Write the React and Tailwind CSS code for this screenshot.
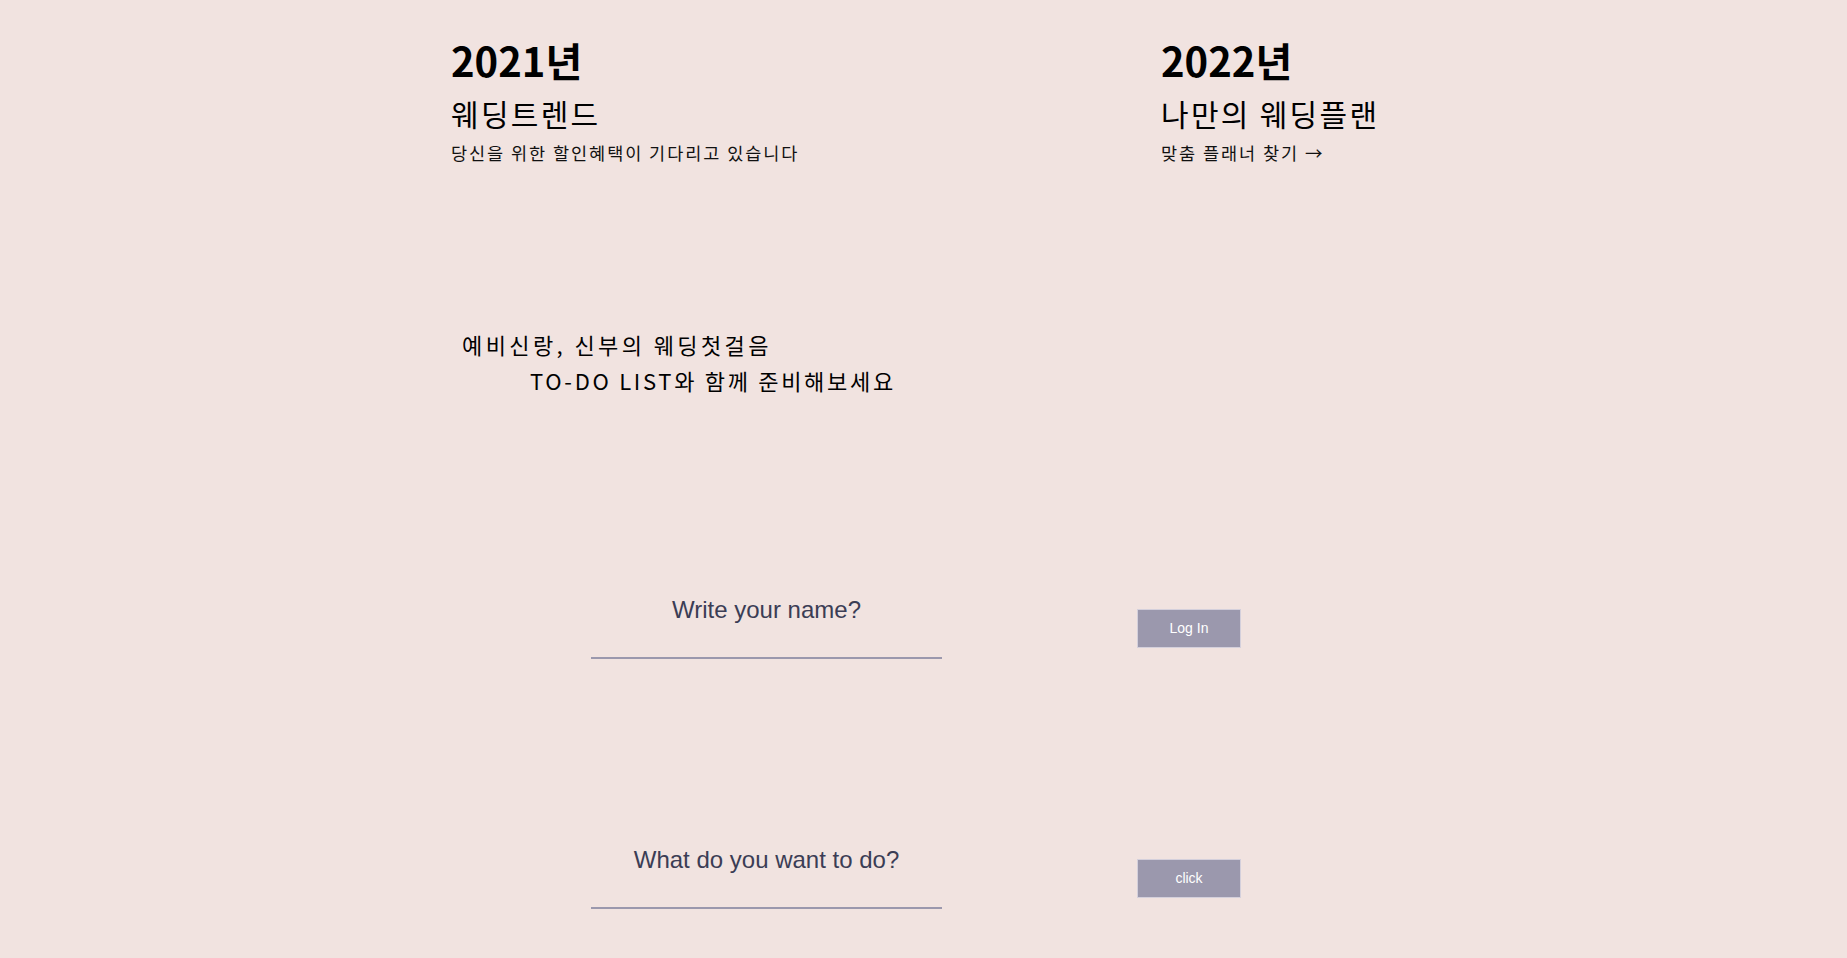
import { useState } from 'react';

const Header = ({ year, title, sub }) => (
  <div className="flex flex-col">
    <h1 className="text-[40px] leading-[48px] font-bold text-black">{year}</h1>
    <h2 className="mt-[11px] text-[30px] leading-[36px] font-normal tracking-[2.3px] text-black">{title}</h2>
    <p className="mt-[10px] text-[17.5px] leading-[24px] tracking-[1.95px] text-[#111]">{sub}</p>
  </div>
);

const InputRow = ({ placeholder, label, value, onChange }) => (
  <form
    className="flex items-start"
    onSubmit={(e) => e.preventDefault()}
  >
    <input
      type="text"
      value={value}
      onChange={onChange}
      placeholder={placeholder}
      className="ml-[140px] w-[351px] h-[64px] pt-0 pb-[32px] bg-transparent border-0 border-b-2 border-[#9b98ad] text-center text-[24px] text-[#3b3d55] placeholder:text-[#3b3d55] outline-none font-['Liberation_Sans',Arial,sans-serif]"
    />
    <button
      type="submit"
      className="ml-[195px] mt-[14px] w-[104px] h-[39px] bg-[#9b98ad] border border-[#d4d0dc] text-white text-[14px] font-['Liberation_Sans',Arial,sans-serif]"
    >
      {label}
    </button>
  </form>
);

export default function App() {
  const [name, setName] = useState('');
  const [todo, setTodo] = useState('');

  return (
    <div className="min-h-[958px] w-full bg-[#f1e3e0] font-['Noto_Sans_CJK_KR','Noto_Sans',sans-serif]">
      <div className="mx-auto w-[945px] pt-[36px]">
        {/* Top trend / plan */}
        <div className="flex">
          <div className="w-[710px]">
            <Header year="2021년" title="웨딩트렌드" sub="당신을 위한 할인혜택이 기다리고 있습니다" />
          </div>
          <div>
            <Header year="2022년" title="나만의 웨딩플랜" sub="맞춤 플래너 찾기 →" />
          </div>
        </div>

        {/* Intro */}
        <div className="mt-[161px] text-[22px] leading-[36px] text-black">
          <p className="pl-[11px] tracking-[3.4px]">예비신랑, 신부의 웨딩첫걸음</p>
          <p className="pl-[79px] tracking-[2.7px]">TO-DO LIST와 함께 준비해보세요</p>
        </div>

        {/* Login */}
        <div className="mt-[197px]">
          <InputRow
            placeholder="Write your name?"
            label="Log In"
            value={name}
            onChange={(e) => setName(e.target.value)}
          />
        </div>

        {/* Todo */}
        <div className="mt-[186px]">
          <InputRow
            placeholder="What do you want to do?"
            label="click"
            value={todo}
            onChange={(e) => setTodo(e.target.value)}
          />
        </div>
      </div>
    </div>
  );
}
